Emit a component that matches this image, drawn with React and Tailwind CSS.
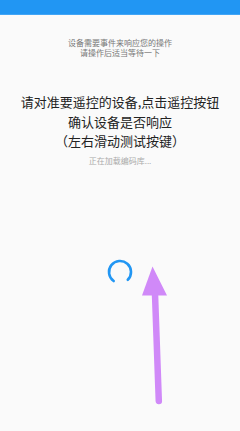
export default function App() {
  return (
    <div
      className="relative w-[240px] h-[431px] overflow-hidden bg-[#fafafa]"
      style={{ fontFamily: '"Noto Sans CJK SC", "Noto Sans", sans-serif' }}
    >
      <div className="w-full h-[15px] bg-[rgb(33,150,243)] border-b border-[#42a5f5]" />
      <div className="flex flex-col items-center">
        <div className="mt-[23px] flex flex-col items-center text-[8px] leading-[10px] text-[#777]">
          <span>设备需要事件来响应您的操作</span>
          <span>请操作后适当等待一下</span>
        </div>
        <div className="mt-[34px] flex flex-col items-center text-[13px] leading-[19.5px] text-[#222]">
          <span>请对准要遥控的设备,点击遥控按钮</span>
          <span>确认设备是否响应</span>
          <span>（左右滑动测试按键）</span>
        </div>
        <div className="mt-[5px] text-[8px] leading-[10px] text-[#aaa]">正在加载编码库...</div>
        <svg className="mt-[92px]" width="28" height="28" viewBox="0 0 28 28">
          <path
            d="M7.69 23.01 A11 11 0 1 1 21.78 21.78"
            fill="none"
            stroke="#2196f3"
            strokeWidth="2.6"
            strokeLinecap="round"
          />
        </svg>
      </div>
      <svg className="absolute left-0 top-0 pointer-events-none" width="240" height="431" viewBox="0 0 240 431">
        <polygon points="152.5,266.5 142,295.5 167,295.5" fill="#d089f8" />
        <line x1="155" y1="294" x2="158.8" y2="401" stroke="#d089f8" strokeWidth="6.5" strokeLinecap="round" />
      </svg>
    </div>
  );
}
